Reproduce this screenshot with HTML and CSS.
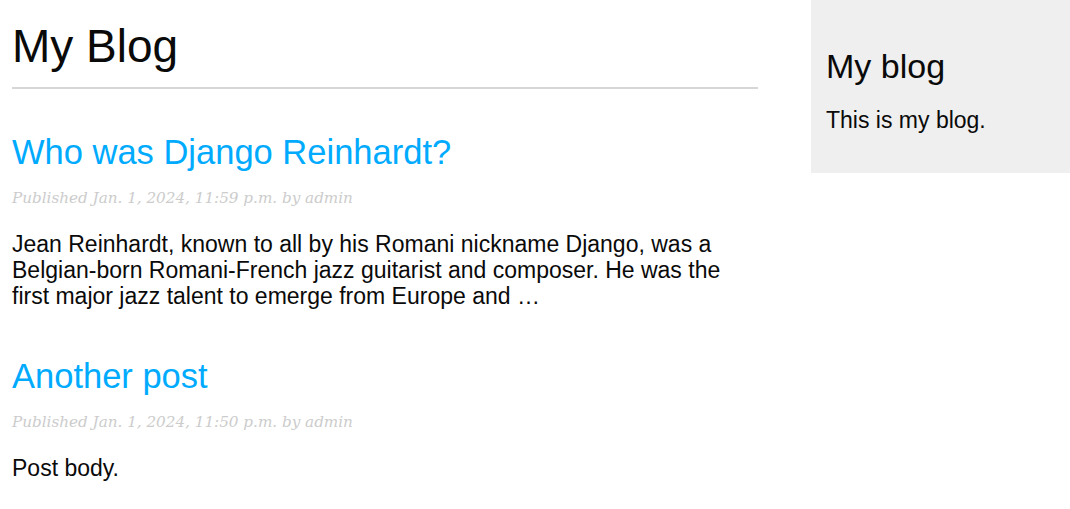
FILE: index.html
```html
<!DOCTYPE html>
<html>
<head>
<meta charset="utf-8">
<title>My Blog</title>
<link rel="stylesheet" href="styles.css">
</head>
<body>
<div class="page">
  <main class="content">
    <h1 class="site-title">My Blog</h1>
    <article class="post">
      <h2 class="post-title"><a href="#">Who was Django Reinhardt?</a></h2>
      <p class="date">Published Jan. 1, 2024, 11:59 p.m. by admin</p>
      <p class="body">Jean Reinhardt, known to all by his Romani nickname Django, was a Belgian-born Romani-French jazz guitarist and composer. He was the first major jazz talent to emerge from Europe and …</p>
    </article>
    <article class="post">
      <h2 class="post-title"><a href="#">Another post</a></h2>
      <p class="date">Published Jan. 1, 2024, 11:50 p.m. by admin</p>
      <p class="body">Post body.</p>
    </article>
  </main>
  <aside class="sidebar">
    <h2 class="side-title">My blog</h2>
    <p class="side-text">This is my blog.</p>
  </aside>
</div>
</body>
</html>
```
FILE: styles.css
```css
html, body {
  margin: 0;
  padding: 0;
  background: #fff;
}
body {
  font-family: "Liberation Sans", Arial, Helvetica, sans-serif;
  color: #0a0a0a;
}
.page {
  display: flex;
  justify-content: space-between;
  align-items: flex-start;
}
.content {
  width: 746px;
  padding-left: 12px;
}
.site-title {
  font-size: 46px;
  line-height: 54px;
  font-weight: normal;
  margin: 19px 0 0;
  padding-bottom: 14px;
  border-bottom: 2px solid #d6d6d6;
}
.post-title {
  font-size: 34.5px;
  line-height: 40px;
  font-weight: normal;
  margin: 43px 0 0;
}
.post + .post .post-title {
  margin-top: 47px;
}
.post-title a {
  color: #00abff;
  text-decoration: none;
}
.date {
  font-family: "DejaVu Serif", Georgia, serif;
  font-style: italic;
  font-size: 15.2px;
  line-height: 20px;
  color: #ccc;
  margin: 16px 0 0;
}
.body {
  font-size: 23px;
  line-height: 26px;
  margin: 23px 0 0;
}
.sidebar {
  width: 229px;
  background: #efefef;
  padding: 0 15px 40px;
}
.side-title {
  font-size: 34px;
  line-height: 40px;
  font-weight: normal;
  margin: 46px 0 0;
}
.side-text {
  font-size: 23px;
  line-height: 26px;
  margin: 21px 0 0;
}
```
